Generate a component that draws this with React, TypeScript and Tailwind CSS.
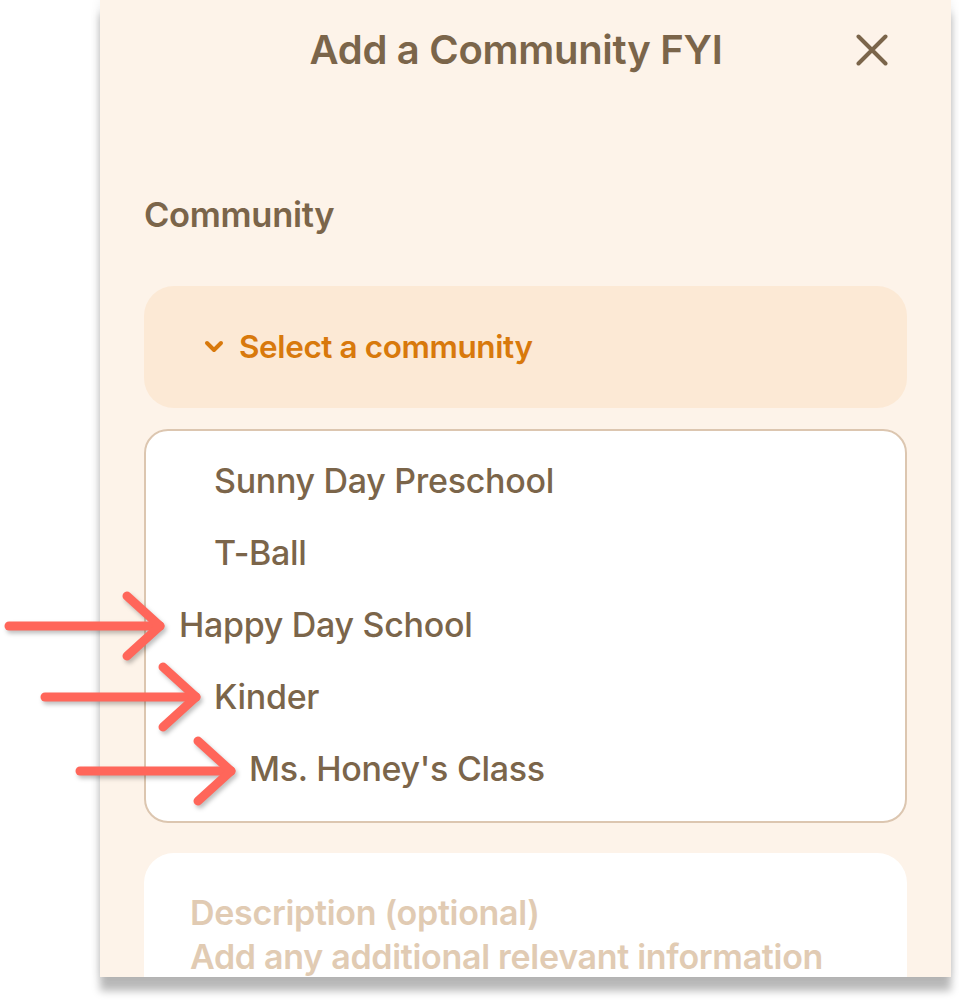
import React from "react";

const communities = [
  { name: "Sunny Day Preschool", indent: "pl-[68px]" },
  { name: "T-Ball", indent: "pl-[68px]" },
  { name: "Happy Day School", indent: "pl-[33px]" },
  { name: "Kinder", indent: "pl-[68px]" },
  { name: "Ms. Honey's Class", indent: "pl-[103px]" },
];

function Arrow({ x, y }: { x: number; y: number }) {
  // shaft ends at tip (x, y), 152px long
  return (
    <g>
      <path d={`M${x - 151} ${y} H${x}`} />
      <path d={`M${x - 33} ${y - 30} L${x} ${y} L${x - 33} ${y + 30}`} />
    </g>
  );
}

export default function App() {
  return (
    <div className="relative w-[959px] h-[1001px] bg-white overflow-hidden" style={{ fontFamily: "Inter, 'Noto Sans', sans-serif" }}>
      <div className="ml-[100px] w-[851px] h-[977px] bg-[#fdf3e9] overflow-hidden shadow-[0_14px_8px_rgba(0,0,0,0.27),0_0_10px_rgba(0,0,0,0.08)]">
        <div className="h-[100px] flex items-center justify-between px-[40px]">
          <div className="w-[30px]" />
          <h1 className="text-[40px] font-semibold text-[#7b654a] tracking-[-0.3px] ml-[15px]">Add a Community FYI</h1>
          <button className="w-[50px] h-[50px] flex items-center justify-center text-[#7b654a] mr-[14px]">
            <svg width="32" height="32" viewBox="0 0 32 32" fill="none" stroke="currentColor" strokeWidth="4" strokeLinecap="round">
              <path d="M2.5 2.5 L29.5 29.5 M29.5 2.5 L2.5 29.5" />
            </svg>
          </button>
        </div>

        <div className="px-[44px]">
          <div className="pt-[92px] text-[34.5px] font-semibold text-[#7b654a] leading-[46px] tracking-[-0.3px]">Community</div>

          <div className="mt-[48px] h-[122px] rounded-[30px] bg-[#fce9d5] flex items-center pl-[59px] gap-[14px] text-[#d8790c]">
            <svg width="22" height="14" viewBox="0 0 22 14" fill="none" stroke="currentColor" strokeWidth="4" strokeLinecap="round" strokeLinejoin="round">
              <path d="M4 3 L11 10 L18 3" />
            </svg>
            <span className="text-[31.5px] font-semibold tracking-[-0.4px]">Select a community</span>
          </div>

          <div className="mt-[21px] h-[394px] rounded-[24px] border-2 border-[#dcc6b0] bg-white pt-[13px] pb-[21px]">
            {communities.map((c) => (
              <div key={c.name} className={`h-[72px] flex items-center ${c.indent} text-[34px] font-medium text-[#7b654a] tracking-[-0.3px]`}>
                {c.name}
              </div>
            ))}
          </div>

          <div className="mt-[30px] h-[200px] rounded-[30px] bg-white pt-[38px] px-[46px] text-[34px] font-semibold text-[#e1cbb3] leading-[44px] tracking-[-0.3px]">
            <div>Description (optional)</div>
            <div>Add any additional relevant information</div>
          </div>
        </div>
      </div>

      <svg className="absolute left-0 top-0 pointer-events-none" width="959" height="1001" fill="none" stroke="#ff665a" strokeWidth="9" strokeLinecap="round" strokeLinejoin="round" style={{ filter: "drop-shadow(2px 3px 2px rgba(0,0,0,0.25))" }}>
        <Arrow x={160} y={626} />
        <Arrow x={196} y={697} />
        <Arrow x={231} y={771} />
      </svg>
    </div>
  );
}
